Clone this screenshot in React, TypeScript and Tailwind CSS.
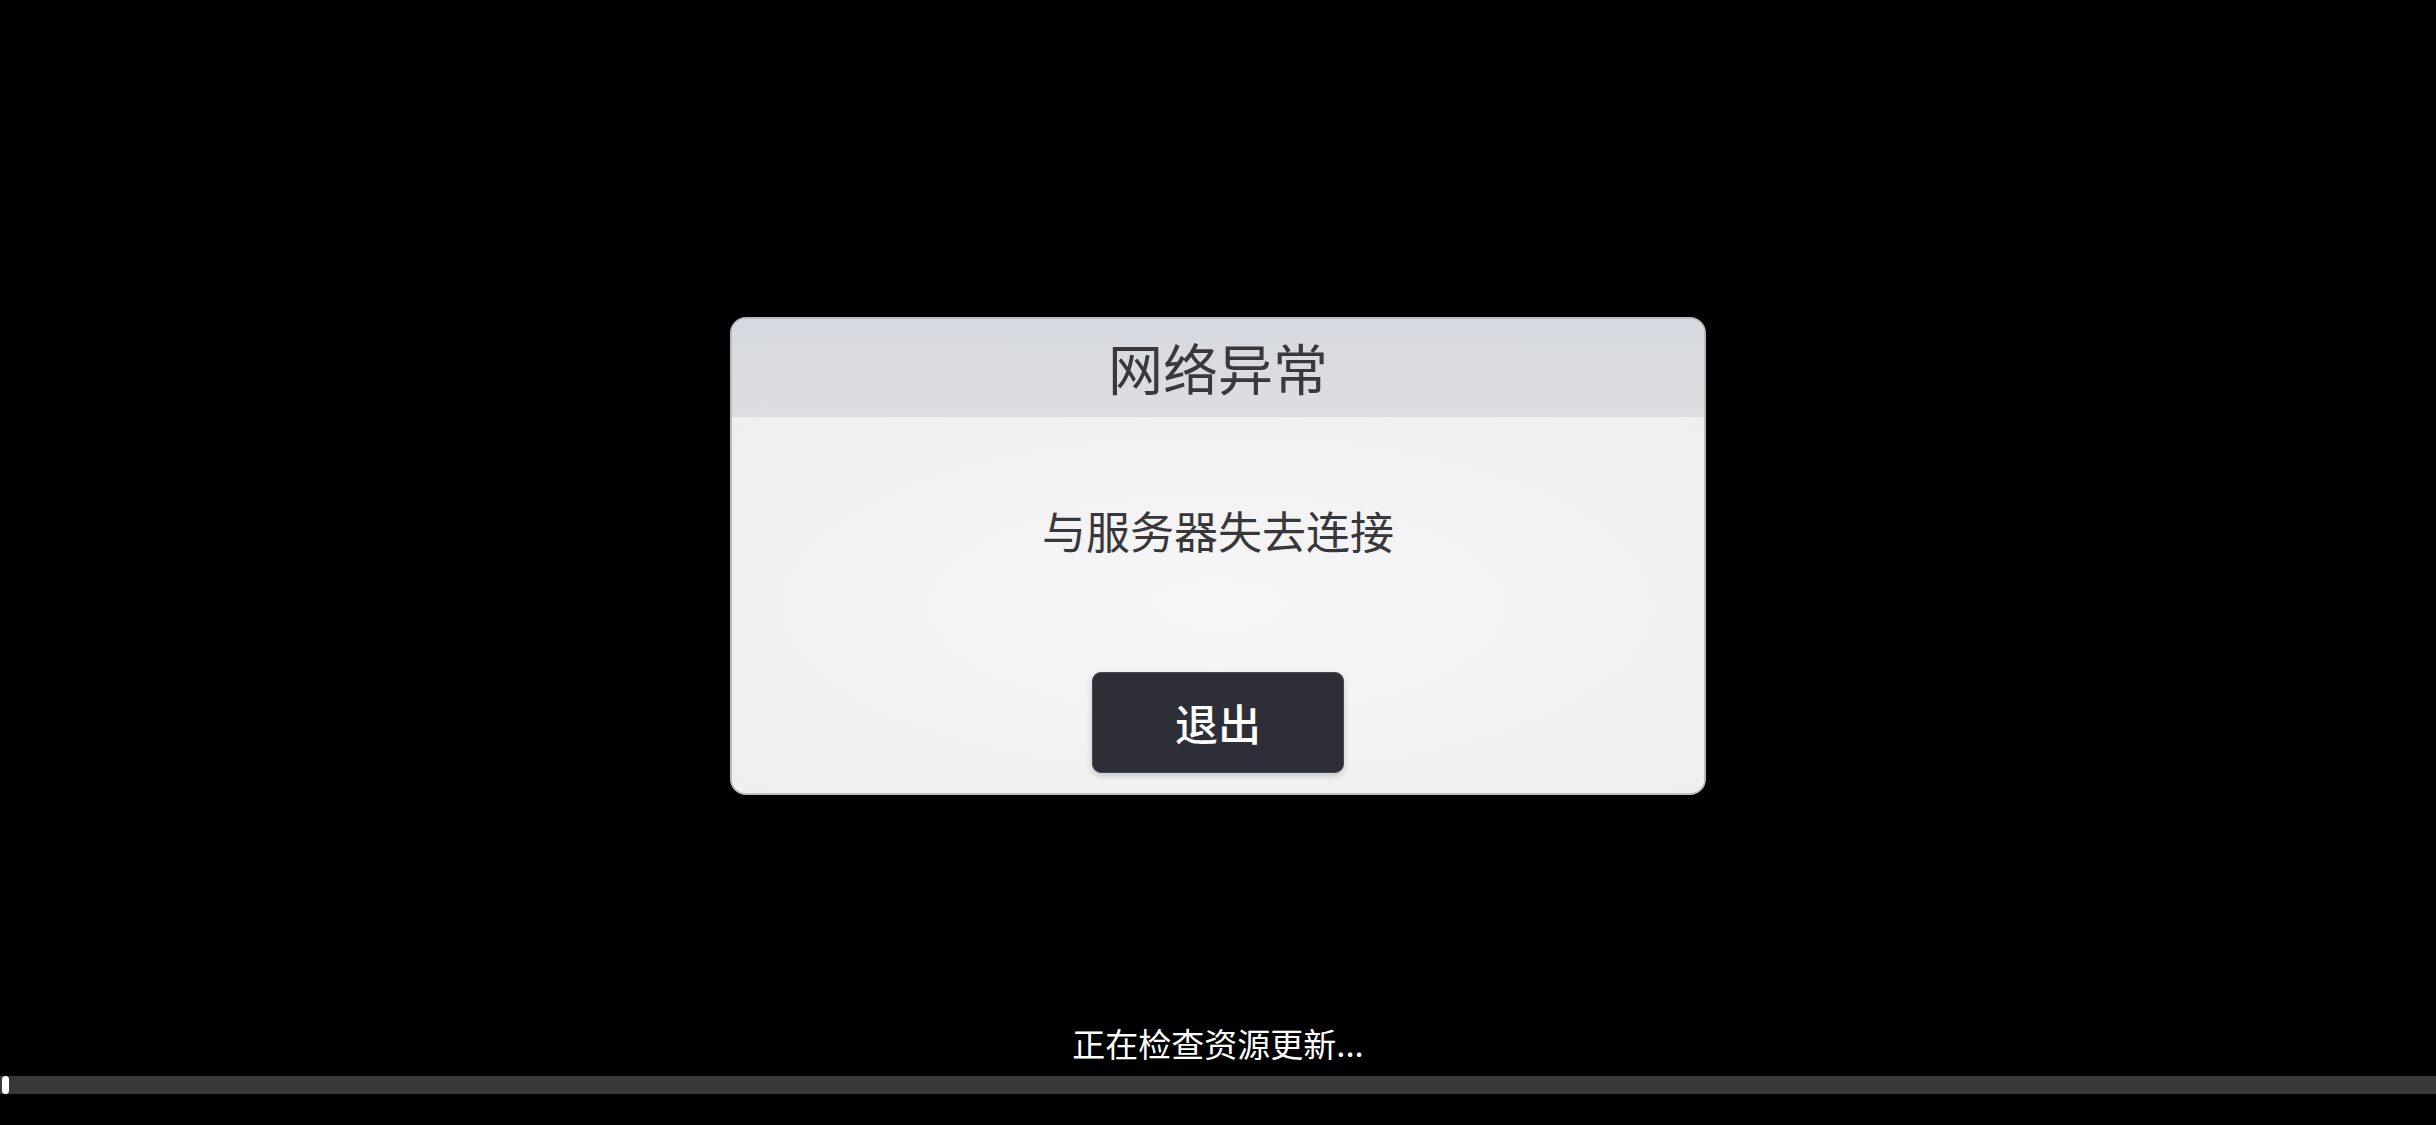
import type { JSX } from "react";

// Pantalla de arranque con el aviso de conexion perdida y la barra de progreso
// de la comprobacion de recursos abajo.
const cjk = "font-['Noto_Sans_CJK_SC','Noto_Sans',sans-serif]";

function NetworkDialog(): JSX.Element {
  return (
    <div className="flex h-[478px] w-[976px] flex-col overflow-hidden rounded-[16px] border-2 border-[#b9bbc0] bg-[#f2f2f2]">
      <div className="flex h-[98px] items-center justify-center pb-[3px] bg-gradient-to-b from-[#d6d9df] to-[#dcdee2]">
        <h1 className={`${cjk} text-[55px] leading-none text-[#39393d]`}>网络异常</h1>
      </div>
      <div className="flex flex-1 flex-col items-center bg-[radial-gradient(ellipse_at_center,#f6f6f6_0%,#efefef_100%)] pt-[85px]">
        <p className={`${cjk} text-[44px] leading-[56px] text-[#38383c]`}>与服务器失去连接</p>
        <button
          className={`${cjk} mt-[114px] flex h-[101px] w-[252px] items-center justify-center rounded-[9px] border border-[#464854] bg-[#2d2e37] text-[43px] font-medium text-white shadow-[0_3px_6px_rgba(0,0,0,0.18)]`}
        >
          退出
        </button>
      </div>
    </div>
  );
}

export default function App(): JSX.Element {
  return (
    <div className="flex h-[1125px] w-full flex-col bg-black">
      <div className="flex justify-center pt-[317px]">
        <NetworkDialog />
      </div>
      <div className="flex-1" />
      <p className={`${cjk} mb-[12px] text-center text-[33px] leading-[42px] text-white`}>
        正在检查资源更新...
      </p>
      <div className="mb-[31px] flex h-[18px] w-full items-center bg-[#383838]">
        <div className="ml-[2px] h-[18px] w-[7px] rounded-full bg-white" />
      </div>
    </div>
  );
}
